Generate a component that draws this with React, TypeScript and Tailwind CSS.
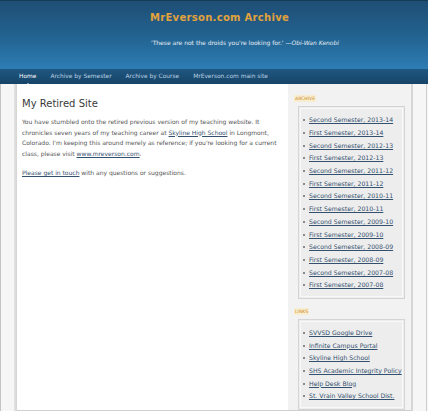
import React from "react";

const archive = [
  "Second Semester, 2013-14",
  "First Semester, 2013-14",
  "Second Semester, 2012-13",
  "First Semester, 2012-13",
  "Second Semester, 2011-12",
  "First Semester, 2011-12",
  "Second Semester, 2010-11",
  "First Semester, 2010-11",
  "Second Semester, 2009-10",
  "First Semester, 2009-10",
  "Second Semester, 2008-09",
  "First Semester, 2008-09",
  "Second Semester, 2007-08",
  "First Semester, 2007-08",
];

const links = [
  "SVVSD Google Drive",
  "Infinite Campus Portal",
  "Skyline High School",
  "SHS Academic Integrity Policy",
  "Help Desk Blog",
  "St. Vrain Valley School Dist.",
];

function SideList({ items }: { items: string[] }) {
  return (
    <div className="ml-[10px] mr-[6px] border border-[#d4d4d4] bg-[#ededed] p-[1px]">
      <ul className="border border-[#f8f8f8] pt-[5px] pb-[4px] pl-[2px]">
        {items.map((t) => (
          <li key={t} className="flex items-center h-[12.7px]">
            <span className="w-[2px] h-[2px] bg-[#8a8a8a] mr-[4px] shrink-0" />
            <a className="text-[6.2px] leading-[8px] text-[#34506f] underline whitespace-nowrap">{t}</a>
          </li>
        ))}
      </ul>
    </div>
  );
}

function Label({ children }: { children: React.ReactNode }) {
  return (
    <div className="ml-[6px] mb-[4px] w-fit bg-[#f7eed0] px-[1px] text-[4.6px] leading-[7px] text-[#d48a2c] uppercase">
      {children}
    </div>
  );
}

export default function App() {
  return (
    <div className="w-[428px] h-[411px] overflow-hidden bg-[#f5f5f5] font-['DejaVu_Sans',sans-serif] flex flex-col leading-none">
      <header className="h-[69px] shrink-0 bg-gradient-to-b from-[#1f4e75] via-[#22628f] to-[#2d7db5] border-t border-[#173a57] pl-[150px]">
        <h1 className="mt-[10px] text-[10px] leading-[14px] font-bold text-[#e2a23c] tracking-[0.3px]">MrEverson.com Archive</h1>
        <p className="mt-[14px] ml-[1px] text-[6px] leading-[8px] text-[#e6eef5]">
          'These are not the droids you're looking for.' —<span className="italic">Obi-Wan Kenobi</span>
        </p>
      </header>
      <nav className="h-[15px] shrink-0 bg-gradient-to-b from-[#1e5781] to-[#174467] flex items-center pl-[19px] gap-[14px] text-[5.9px] text-[#bcd2e4] relative">
        <span className="text-white relative">
          Home
          <span className="absolute left-1/2 -translate-x-1/2 top-[9px] w-0 h-0 border-l-[3px] border-r-[3px] border-b-[3px] border-l-transparent border-r-transparent border-b-white" />
        </span>
        <span>Archive by Semester</span>
        <span>Archive by Course</span>
        <span>MrEverson.com main site</span>
      </nav>
      <div className="flex flex-1 min-h-0">
        <div className="w-[17px] shrink-0 flex">
          <div className="w-[1px] bg-[#c4c4c4]" />
          <div className="w-[13px] bg-[#f6f6f6]" />
          <div className="w-[3px] bg-gradient-to-r from-[#e4e4e4] to-[#d4d4d4]" />
        </div>
        <main className="w-[271px] shrink-0 bg-white pl-[5px] pr-[4px] pt-[14px] border-b border-[#cfcfcf]">
          <h2 className="text-[10px] leading-[12px] text-[#3a3a3a]">My Retired Site</h2>
          <p className="mt-[7px] text-[6px] leading-[10.6px] text-[#555]">
            You have stumbled onto the retired previous version of my teaching website. It chronicles seven years of my teaching career at{" "}
            <a className="underline text-[#34506f]">Skyline High School</a> in Longmont, Colorado. I'm keeping this around merely as reference; if you're looking for a current class, please visit{" "}
            <a className="underline text-[#34506f]">www.mreverson.com</a>.
          </p>
          <p className="mt-[9px] text-[6px] leading-[10.6px] text-[#555]">
            <a className="underline text-[#34506f]">Please get in touch</a> with any questions or suggestions.
          </p>
        </main>
        <aside className="w-[123px] shrink-0 bg-[#f2f2f2] pt-[11px] border-b border-[#cfcfcf]">
          <Label>Archive</Label>
          <SideList items={archive} />
          <div className="h-[9px]" />
          <Label>Links</Label>
          <SideList items={links} />
        </aside>
        <div className="w-[17px] shrink-0 flex">
          <div className="w-[2px] bg-[#d6d6d6]" />
          <div className="w-[13px] bg-[#f6f6f6]" />
          <div className="w-[1px] bg-[#cfcfcf]" />
        </div>
      </div>
    </div>
  );
}
